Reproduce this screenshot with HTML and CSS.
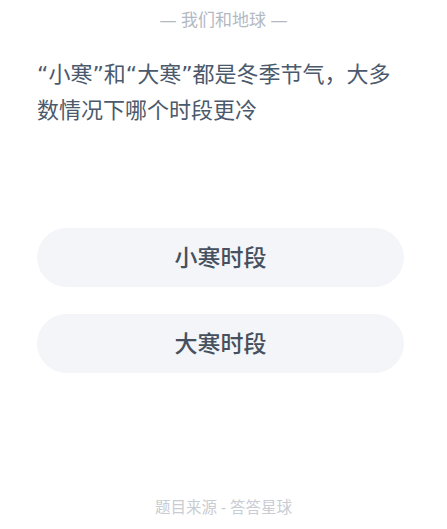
FILE: index.html
```html
<!DOCTYPE html>
<html lang="zh">
<head>
  <meta charset="UTF-8" />
  <meta name="viewport" content="width=device-width, initial-scale=1.0"/>
  <title>我们和地球</title>
  <link rel="stylesheet" href="styles.css">
</head>
<body>
  <div class="page">
    <div class="topic">— 我们和地球 —</div>
    <div class="question">“小寒”和“大寒”都是冬季节气，大多数情况下哪个时段更冷</div>

    <div class="options">
      <button class="option">小寒时段</button>
      <button class="option">大寒时段</button>
    </div>

    <div class="source">题目来源 - 答答星球</div>
  </div>
</body>
</html>
```

FILE: styles.css
```css
body {
  margin: 0;
  padding: 0;
  background: #fff;
  font-family: "Noto Sans", "Noto Sans CJK SC", sans-serif;
}

.page {
  height: 529px;
  box-sizing: border-box;
  padding: 9px 43px 11px 37px;
  display: flex;
  flex-direction: column;
}

.topic {
  font-size: 17px;
  line-height: 22px;
  color: #b3b9c2;
  text-align: center;
  margin-left: 6px;
}

.question {
  margin-top: 26px;
  font-family: "DejaVu Sans", "Noto Sans CJK SC", sans-serif;
  font-size: 22px;
  line-height: 36px;
  color: #4b596c;
}

.options {
  margin-top: 99px;
  display: flex;
  flex-direction: column;
  gap: 27px;
}

.option {
  height: 59px;
  border: none;
  border-radius: 30px;
  background: #f3f5f8;
  font-family: inherit;
  font-size: 23px;
  font-weight: 500;
  color: #46505e;
  padding: 0 0 4px;
}

.source {
  margin-top: auto;
  font-size: 15.5px;
  line-height: 22px;
  color: #c9cdd3;
  text-align: center;
  margin-left: 6px;
}
```
